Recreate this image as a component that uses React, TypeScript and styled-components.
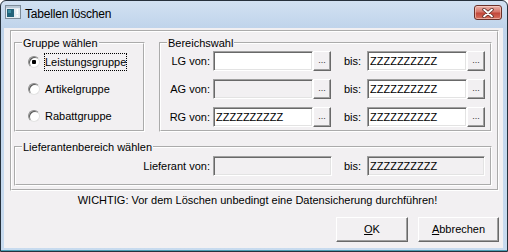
import React from 'react';
import styled, { createGlobalStyle } from 'styled-components';

const GlobalStyle = createGlobalStyle`
  html, body {
    margin: 0;
    padding: 0;
    background: #ffffff;
  }
  body {
    font-family: "Liberation Sans", Arial, sans-serif;
    font-size: 11px;
    color: #000;
  }
`;

const rows = [
  { label: 'LG von:', from: '', fromDisabled: false, to: 'ZZZZZZZZZZ' },
  { label: 'AG von:', from: '', fromDisabled: true, to: 'ZZZZZZZZZZ' },
  { label: 'RG von:', from: 'ZZZZZZZZZZ', fromDisabled: false, to: 'ZZZZZZZZZZ' },
];

const groups = ['Leistungsgruppe', 'Artikelgruppe', 'Rabattgruppe'];

const AppIcon = () => (
  <svg width="16" height="14" viewBox="0 0 16 14">
    <rect x="0.5" y="0.5" width="15" height="13" fill="#e4ebf1" stroke="#7d8c99" />
    <rect x="1" y="1" width="14" height="2" fill="#b9c8d6" />
    <rect x="2" y="4" width="7" height="8" fill="#23637a" />
    <rect x="3" y="5" width="3" height="3" fill="#3e8fa3" />
    <rect x="11.5" y="4" width="1.6" height="5" fill="#ffffff" />
    <rect x="11.5" y="10" width="1.6" height="1.6" fill="#ffffff" />
  </svg>
);

const CloseGlyph = () => (
  <svg width="12" height="10" viewBox="0 0 12 10">
    <path d="M2 1.5 L10 8.5 M10 1.5 L2 8.5" stroke="#5a2a24" strokeWidth="3.4" strokeLinecap="round" />
    <path d="M2 1.5 L10 8.5 M10 1.5 L2 8.5" stroke="#ffffff" strokeWidth="1.8" strokeLinecap="round" />
  </svg>
);

const App = () => {
  return (
    <>
      <GlobalStyle />
      <Window>
        <TitleBar>
          <IconSlot>
            <AppIcon />
          </IconSlot>
          <Title>Tabellen löschen</Title>
          <CloseButton>
            <CloseGlyph />
          </CloseButton>
        </TitleBar>
        <Client>
          <Panel>
            <TopRow>
              <Group>
                <Legend>Gruppe wählen</Legend>
                <RadioList>
                  {groups.map((g, i) => (
                    <RadioRow key={g}>
                      <Radio $checked={i === 0} />
                      <RadioLabel $focused={i === 0}>{g}</RadioLabel>
                    </RadioRow>
                  ))}
                </RadioList>
              </Group>
              <Group $grow>
                <Legend>Bereichswahl</Legend>
                <RangeGrid>
                  {rows.map(r => (
                    <React.Fragment key={r.label}>
                      <FieldLabel>{r.label}</FieldLabel>
                      <Picker>
                        <TextBox $disabled={r.fromDisabled}>{r.from}</TextBox>
                        <DotsButton>...</DotsButton>
                      </Picker>
                      <ToLabel $indent={13}>bis:</ToLabel>
                      <Picker>
                        <TextBox>{r.to}</TextBox>
                        <DotsButton>...</DotsButton>
                      </Picker>
                    </React.Fragment>
                  ))}
                </RangeGrid>
              </Group>
            </TopRow>
            <SupplierGroup>
              <Legend>Lieferantenbereich wählen</Legend>
              <SupplierGrid>
                <FieldLabel>Lieferant von:</FieldLabel>
                <TextBox $disabled $width={119}></TextBox>
                <ToLabel $indent={12}>bis:</ToLabel>
                <TextBox $disabled $width={118}>ZZZZZZZZZZ</TextBox>
              </SupplierGrid>
            </SupplierGroup>
          </Panel>
          <Notice>WICHTIG: Vor dem Löschen unbedingt eine Datensicherung durchführen!</Notice>
          <ButtonRow>
            <DialogButton $width={72}><u>O</u>K</DialogButton>
            <DialogButton $width={81}><u>A</u>bbrechen</DialogButton>
          </ButtonRow>
        </Client>
      </Window>
    </>
  );
};

const Window = styled.div`
  width: 508px;
  height: 252px;
  box-sizing: border-box;
  display: flex;
  flex-direction: column;
  border: 1px solid #26313c;
  border-radius: 6px 6px 0 0;
  background: linear-gradient(#d2e1f2, #c0d4eb 26px, #c8dbef);
  box-shadow: inset 0 -1px 0 #4d9fb4;
  overflow: hidden;
`;

const TitleBar = styled.div`
  height: 26px;
  flex: 0 0 auto;
  display: flex;
  align-items: flex-start;
  padding-left: 4px;
`;

const IconSlot = styled.div`
  margin-top: 4px;
  width: 16px;
  height: 14px;
  display: flex;
`;

const Title = styled.div`
  margin-left: 4px;
  margin-top: 5px;
  font-size: 12px;
  line-height: 16px;
  letter-spacing: -0.2px;
  color: #000;
`;

const CloseButton = styled.div`
  margin-left: auto;
  margin-right: 5px;
  margin-top: 4px;
  width: 28px;
  height: 15px;
  box-sizing: border-box;
  border: 1px solid #6a3029;
  border-radius: 3px;
  background: linear-gradient(#eab3aa, #d6766a 45%, #c2483b 55%, #d7705f);
  box-shadow: inset 0 0 0 1px rgba(255, 220, 210, 0.55);
  display: flex;
  align-items: center;
  justify-content: center;
`;

const Client = styled.div`
  flex: 1 1 auto;
  margin: 1px 4px 3px 3px;
  background: #f2f0f2;
  display: flex;
  flex-direction: column;
`;

const Panel = styled.div`
  margin: 2px 4px 0 6px;
  border: 2px groove #ffffff;
  padding: 5px 5px 3px 2px;
  display: flex;
  flex-direction: column;
`;

const TopRow = styled.div`
  display: flex;
  gap: 14px;
  align-items: stretch;
`;

const Group = styled.fieldset<{ $grow?: boolean }>`
  margin: 0;
  padding: 0;
  min-width: 0;
  border: 2px groove #ffffff;
  width: ${p => (p.$grow ? '333px' : '131px')};
  box-sizing: border-box;
`;

const SupplierGroup = styled(Group)`
  width: auto;
  margin-top: 9px;
`;

const Legend = styled.legend`
  margin-left: 6px;
  padding: 0 1px;
  font-size: 11px;
  line-height: 12px;
`;

const RadioList = styled.div`
  display: flex;
  flex-direction: column;
  gap: 9px;
  padding: 4px 0 3px 12px;
`;

const RadioRow = styled.div`
  display: flex;
  align-items: center;
  height: 18px;
`;

const Radio = styled.span<{ $checked: boolean }>`
  width: 12px;
  height: 12px;
  box-sizing: border-box;
  border-radius: 50%;
  border: 1px solid;
  border-color: #8d8d8d #e2e2e2 #e2e2e2 #8d8d8d;
  background: ${p =>
    p.$checked
      ? 'radial-gradient(circle, #000 0 2px, #fff 2.5px)'
      : '#ffffff'};
  box-shadow: inset 1px 1px 0 #5a5a5a;
  flex: 0 0 auto;
`;

const RadioLabel = styled.span<{ $focused: boolean }>`
  margin-left: 4px;
  border: 1px dotted ${p => (p.$focused ? '#000' : 'transparent')};
  line-height: 16px;
  padding: 0;
  white-space: nowrap;
`;

const RangeGrid = styled.div`
  display: grid;
  grid-template-columns: 52px 118px 36px 118px;
  grid-auto-rows: 20px;
  row-gap: 8px;
  align-items: center;
  padding: 2px 5px 3px 0;
`;

const SupplierGrid = styled.div`
  display: grid;
  grid-template-columns: 197px 119px 35px 118px;
  grid-auto-rows: 20px;
  align-items: center;
  padding: 3px 5px 8px 0;
`;

const FieldLabel = styled.div`
  text-align: right;
  padding-right: 3px;
  white-space: nowrap;
`;

const ToLabel = styled.div<{ $indent: number }>`
  padding-left: ${p => p.$indent}px;
`;

const Picker = styled.div`
  display: flex;
  height: 20px;
`;

const TextBox = styled.div<{ $disabled?: boolean; $width?: number }>`
  width: ${p => p.$width ?? 100}px;
  height: 20px;
  box-sizing: border-box;
  border: 1px solid;
  border-color: #a0a0a0 #ffffff #ffffff #a0a0a0;
  box-shadow: inset 1px 1px 0 #696969, inset -1px -1px 0 #e3e3e3;
  background: ${p => (p.$disabled ? '#f2f0f2' : '#ffffff')};
  padding: 2px 1px 0 2px;
  line-height: 15px;
  white-space: nowrap;
  overflow: hidden;
`;

const DotsButton = styled.div`
  width: 18px;
  height: 20px;
  box-sizing: border-box;
  border: 1px solid;
  border-color: #ffffff #696969 #696969 #ffffff;
  box-shadow: inset -1px -1px 0 #a0a0a0;
  background: #f2f0f2;
  font-size: 9px;
  line-height: 17px;
  text-align: center;
  color: #333;
`;

const Notice = styled.div`
  margin-top: 3px;
  line-height: 13px;
  text-align: center;
  padding-left: 8px;
  white-space: nowrap;
`;

const ButtonRow = styled.div`
  margin-top: 10px;
  display: flex;
  justify-content: flex-end;
  gap: 10px;
  padding-right: 4px;
`;

const DialogButton = styled.div<{ $width: number }>`
  width: ${p => p.$width}px;
  height: 25px;
  box-sizing: border-box;
  border: 1px solid;
  border-color: #ffffff #696969 #696969 #ffffff;
  box-shadow: inset -1px -1px 0 #a0a0a0, 0 0 0 0 transparent;
  background: #f2f0f2;
  display: flex;
  align-items: center;
  justify-content: center;
  line-height: 13px;

  u {
    text-decoration: underline;
    text-underline-offset: 1px;
  }
`;

export default App;
